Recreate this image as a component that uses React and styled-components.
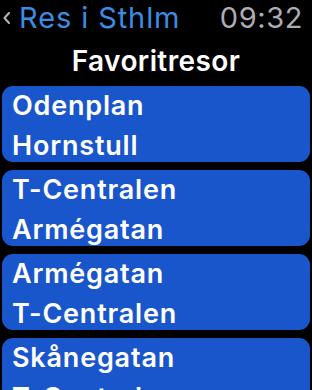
import React from "react";
import styled, { createGlobalStyle } from "styled-components";

const Global = createGlobalStyle`
html, body {
margin: 0;
padding: 0;
background: #000000;
}
body {
font-family: Inter, "Liberation Sans", Arial, sans-serif;
-webkit-font-smoothing: antialiased;
}
`
const Screen = styled.div`
width: 312px;
height: 390px;
overflow: hidden;
background: #000000;
display: flex;
flex-direction: column;
`
const StatusBar = styled.div`
flex-shrink: 0;
display: flex;
flex-direction: row;
align-items: center;
justify-content: space-between;
height: 36px;
padding: 0 9px 0 3px;
`
const Back = styled.div`
display: flex;
flex-direction: row;
align-items: center;
gap: 9px;
`
const BackLabel = styled.div`
font-size: 29px;
font-weight: 400;
line-height: 36px;
color: #3b8de4;
letter-spacing: 0.9px;
`
const Clock = styled.div`
font-size: 29px;
font-weight: 400;
line-height: 36px;
color: #acacb2;
letter-spacing: 0.6px;
`
const Title = styled.h1`
flex-shrink: 0;
margin: 0;
height: 50px;
text-align: center;
font-size: 28px;
font-weight: 580;
line-height: 50px;
color: #ffffff;
letter-spacing: 0.4px;
`
const List = styled.div`
display: flex;
flex-direction: column;
gap: 8px;
padding: 0 2px;
`
const Card = styled.div`
height: 76px;
flex-shrink: 0;
background: #1a56cb;
border-radius: 11px;
padding: 0 10px;
display: flex;
flex-direction: column;
`
const Stop = styled.div`
font-size: 27px;
font-weight: 560;
line-height: 40px;
color: #ffffff;
white-space: nowrap;
letter-spacing: 0.8px;
`

const trips = [
  ["Odenplan", "Hornstull"],
  ["T-Centralen", "Armégatan"],
  ["Armégatan", "T-Centralen"],
  ["Skånegatan", "T-Centralen"],
];

const App = () => {
  return (
    <Screen>
      <Global />
      <StatusBar>
        <Back>
          <svg width="7" height="12" viewBox="0 0 7 12">
            <polyline points="6,1 1.5,6 6,11" fill="none" stroke="#b4b4b8" strokeWidth="2" strokeLinecap="round" strokeLinejoin="round" />
          </svg>
          <BackLabel>Res i Sthlm</BackLabel>
        </Back>
        <Clock>09:32</Clock>
      </StatusBar>
      <Title>Favoritresor</Title>
      <List>
        {trips.map((t, i) => (
          <Card key={i}>
            <Stop>{t[0]}</Stop>
            <Stop>{t[1]}</Stop>
          </Card>
        ))}
      </List>
    </Screen>
  );
};
export default App;
